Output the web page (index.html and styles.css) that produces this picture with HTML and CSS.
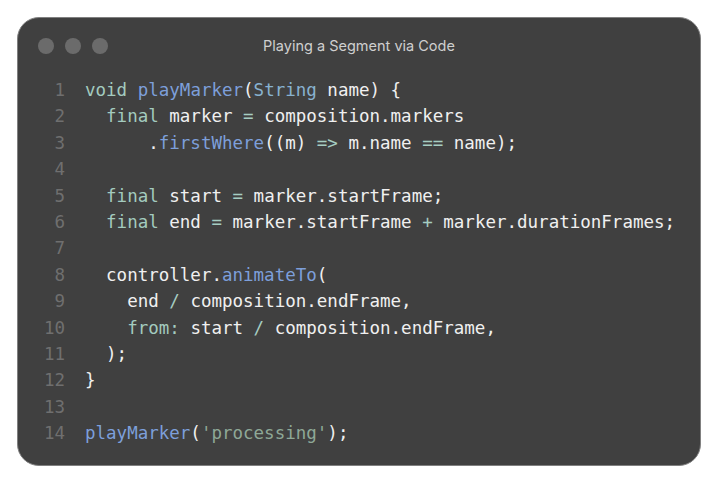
FILE: index.html
```html
<!DOCTYPE html>
<html>
<head>
<meta charset="utf-8">
<link rel="stylesheet" href="styles.css">
</head>
<body>
<div class="window">
  <div class="titlebar">
    <div class="dots"><span class="dot"></span><span class="dot"></span><span class="dot"></span></div>
    <div class="title">Playing a Segment via Code</div>
  </div>
  <div class="code">
    <div class="ln">1</div><div class="line"><span class="k">void</span> <span class="f">playMarker</span>(<span class="t">String</span> name) {</div>
    <div class="ln">2</div><div class="line">  <span class="k">final</span> marker <span class="o">=</span> composition.markers</div>
    <div class="ln">3</div><div class="line">      .<span class="f">firstWhere</span>((m) <span class="o">=&gt;</span> m.name <span class="o">==</span> name);</div>
    <div class="ln">4</div><div class="line"> </div>
    <div class="ln">5</div><div class="line">  <span class="k">final</span> start <span class="o">=</span> marker.startFrame;</div>
    <div class="ln">6</div><div class="line">  <span class="k">final</span> end <span class="o">=</span> marker.startFrame <span class="o">+</span> marker.durationFrames;</div>
    <div class="ln">7</div><div class="line"> </div>
    <div class="ln">8</div><div class="line">  controller.<span class="f">animateTo</span>(</div>
    <div class="ln">9</div><div class="line">    end <span class="o">/</span> composition.endFrame,</div>
    <div class="ln">10</div><div class="line">    <span class="k">from:</span> start <span class="o">/</span> composition.endFrame,</div>
    <div class="ln">11</div><div class="line">  );</div>
    <div class="ln">12</div><div class="line">}</div>
    <div class="ln">13</div><div class="line"> </div>
    <div class="ln">14</div><div class="line"><span class="f">playMarker</span>(<span class="s">'processing'</span>);</div>
  </div>
</div>
</body>
</html>
```

FILE: styles.css
```css
html, body {
  margin: 0;
  background: #ffffff;
}
body {
  padding: 17px 18px 18px 17px;
}
.window {
  background: #404040;
  border: 1px solid #808080;
  border-radius: 22px;
  height: 449px;
  box-sizing: border-box;
  overflow: hidden;
}
.titlebar {
  position: relative;
  height: 56px;
  display: flex;
  align-items: center;
  padding-left: 20px;
}
.dots {
  display: flex;
  gap: 11px;
}
.dot {
  width: 16px;
  height: 16px;
  border-radius: 50%;
  background: #6b6b6b;
}
.title {
  position: absolute;
  left: 0;
  right: 0;
  top: 0;
  line-height: 56px;
  text-align: center;
  font-family: Inter, "Noto Sans", sans-serif;
  font-size: 14.5px;
  color: #cfcfcf;
}
.code {
  display: grid;
  grid-template-columns: 47px 1fr;
  column-gap: 20px;
  padding-top: 3px;
  font-family: "DejaVu Sans Mono", monospace;
  font-size: 17.5px;
  line-height: 26.4px;
  color: #f0f0f0;
  white-space: pre;
}
.ln {
  text-align: right;
  color: #6f6f6f;
}
.k { color: #a3cbbf; }
.f { color: #7d9fda; }
.t { color: #88b2d0; }
.o { color: #a6cdc2; }
.s { color: #8ea897; }
```
